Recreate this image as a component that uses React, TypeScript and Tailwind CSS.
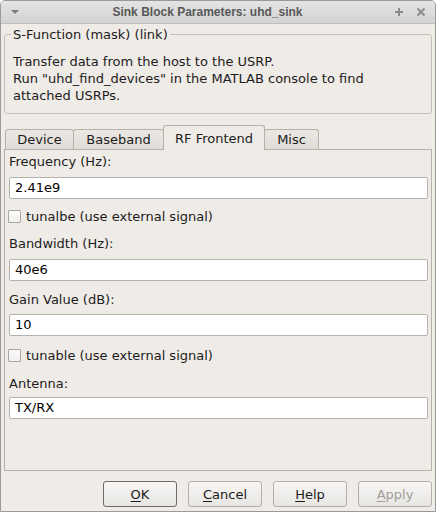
import { useState } from "react";

const fields = {
    freq: "2.41e9",
    bw: "40e6",
    gain: "10",
    antenna: "TX/RX",
};

const tabs = [
    { name: "Device", w: "w-[69px]" },
    { name: "Baseband", w: "w-[91px]" },
    { name: "RF Frontend", w: "w-[102px]" },
    { name: "Misc", w: "w-[55px]" },
];

const TextField = ({ value, className }: { value: string; className?: string }) => (
    <div
        className={`h-[22px] mr-[3px] flex items-center rounded-[2px] border border-[#b6b2ac] bg-white pl-[5px] text-[13px] text-black ${className ?? ""}`}
    >
        {value}
    </div>
);

const Check = ({ label, className }: { label: string; className?: string }) => (
    <div className={`flex h-[17px] items-center gap-[5px] -ml-px ${className ?? ""}`}>
        <div className="h-[13px] w-[13px] rounded-[1px] border border-[#aaa6a0] bg-gradient-to-b from-[#fbfbfb] to-[#f0efee]" />
        <span className="leading-[17px]">{label}</span>
    </div>
);

const Btn = ({
    mnemonic,
    rest,
    isDefault,
    disabled,
}: {
    mnemonic: string;
    rest: string;
    isDefault?: boolean;
    disabled?: boolean;
}) => (
    <button
        className={`h-[26px] w-[74px] rounded-[3px] border bg-gradient-to-b from-[#f7f6f5] to-[#e8e6e3] text-[13px] leading-none ${
            isDefault ? "border-[#6f6c68]" : "border-[#b3afa9]"
        } ${disabled ? "text-[#a19e9a]" : "text-[#1a1a1a]"}`}
    >
        <span className="underline underline-offset-[2px]">{mnemonic}</span>
        {rest}
    </button>
);

export default function App() {
    const [active, setActive] = useState("RF Frontend");

    return (
        <div
            className="flex h-[512px] w-[436px] flex-col overflow-hidden rounded-t-[5px] border border-[#9a9a9a] bg-[#efebe7] text-[13px] text-[#1c1c1c]"
            style={{ fontFamily: '"DejaVu Sans", sans-serif' }}
        >
            {/* title bar */}
            <div className="flex h-[23px] shrink-0 items-center border-b border-[#c2c0bd] bg-gradient-to-b from-[#e4e4e4] to-[#d3d3d3]">
                <div className="flex w-[30px] items-center pl-[9px]">
                    <svg width="10" height="6" viewBox="0 0 10 6">
                        <path d="M1 1 L9 1 L5 5 Z" fill="#7b7b7b" />
                    </svg>
                </div>
                <div
                    className="flex-1 text-center text-[12px] font-bold text-[#585858]"
                    style={{ fontFamily: '"Liberation Sans", sans-serif' }}
                >
                    Sink Block Parameters: uhd_sink
                </div>
                <div className="flex w-[51px] items-center justify-end gap-[12px] pr-[9px]">
                    <svg width="10" height="10" viewBox="0 0 10 10">
                        <path d="M5 1 V9 M1 5 H9" stroke="#8a8a8a" strokeWidth="2" />
                    </svg>
                    <svg width="10" height="10" viewBox="0 0 10 10">
                        <path d="M1.5 1.5 L8.5 8.5 M8.5 1.5 L1.5 8.5" stroke="#8a8a8a" strokeWidth="1.8" />
                    </svg>
                </div>
            </div>

            <div className="flex flex-1 flex-col px-[3px]">
                {/* group box */}
                <fieldset className="mt-[2px] rounded-[3px] border border-[#c3bfb9] px-[8px] pb-[9px]">
                    <legend className="-ml-[2px] px-[2px] leading-[17px]">S-Function (mask) (link)</legend>
                    <div className="mt-[10px] leading-[17px]">
                        <div>Transfer data from the host to the USRP.</div>
                        <div>Run "uhd_find_devices" in the MATLAB console to find</div>
                        <div>attached USRPs.</div>
                    </div>
                </fieldset>

                {/* tabs */}
                <div className="relative z-10 -mb-px mt-[11px] flex h-[25px] items-end pl-px">
                    {tabs.map((t) => {
                        const sel = t.name === active;
                        return (
                            <div
                                key={t.name}
                                onClick={() => setActive(t.name)}
                                className={`${t.w} -mr-px flex items-start justify-center rounded-t-[3px] border border-b-0 border-[#b5b1ab] leading-[17px] ${
                                    sel
                                        ? "h-[25px] bg-[#efebe7] pt-[4px]"
                                        : "mb-px h-[20px] bg-gradient-to-b from-[#ebe8e4] to-[#e0ddd8] pt-[1px]"
                                }`}
                            >
                                {t.name}
                            </div>
                        );
                    })}
                </div>

                {/* tab pane */}
                <div className="flex h-[322px] flex-col border border-[#b5b1ab] bg-[#efebe7] pl-[4px] pt-[3px]">
                    <div className="leading-[17px]">Frequency (Hz):</div>
                    <TextField value={fields.freq} className="mt-[7px]" />
                    <Check label="tunalbe (use external signal)" className="mt-[9px]" />
                    <div className="mt-[10px] leading-[17px]">Bandwidth (Hz):</div>
                    <TextField value={fields.bw} className="mt-[7px]" />
                    <div className="mt-[10px] leading-[17px]">Gain Value (dB):</div>
                    <TextField value={fields.gain} className="mt-[6px]" />
                    <Check label="tunable (use external signal)" className="mt-[11px]" />
                    <div className="mt-[11px] leading-[17px]">Antenna:</div>
                    <TextField value={fields.antenna} className="mt-[5px]" />
                </div>

                {/* buttons */}
                <div className="mt-[10px] flex justify-end gap-[11px]">
                    <Btn mnemonic="O" rest="K" isDefault />
                    <Btn mnemonic="C" rest="ancel" />
                    <Btn mnemonic="H" rest="elp" />
                    <Btn mnemonic="A" rest="pply" disabled />
                </div>
            </div>
        </div>
    );
}
